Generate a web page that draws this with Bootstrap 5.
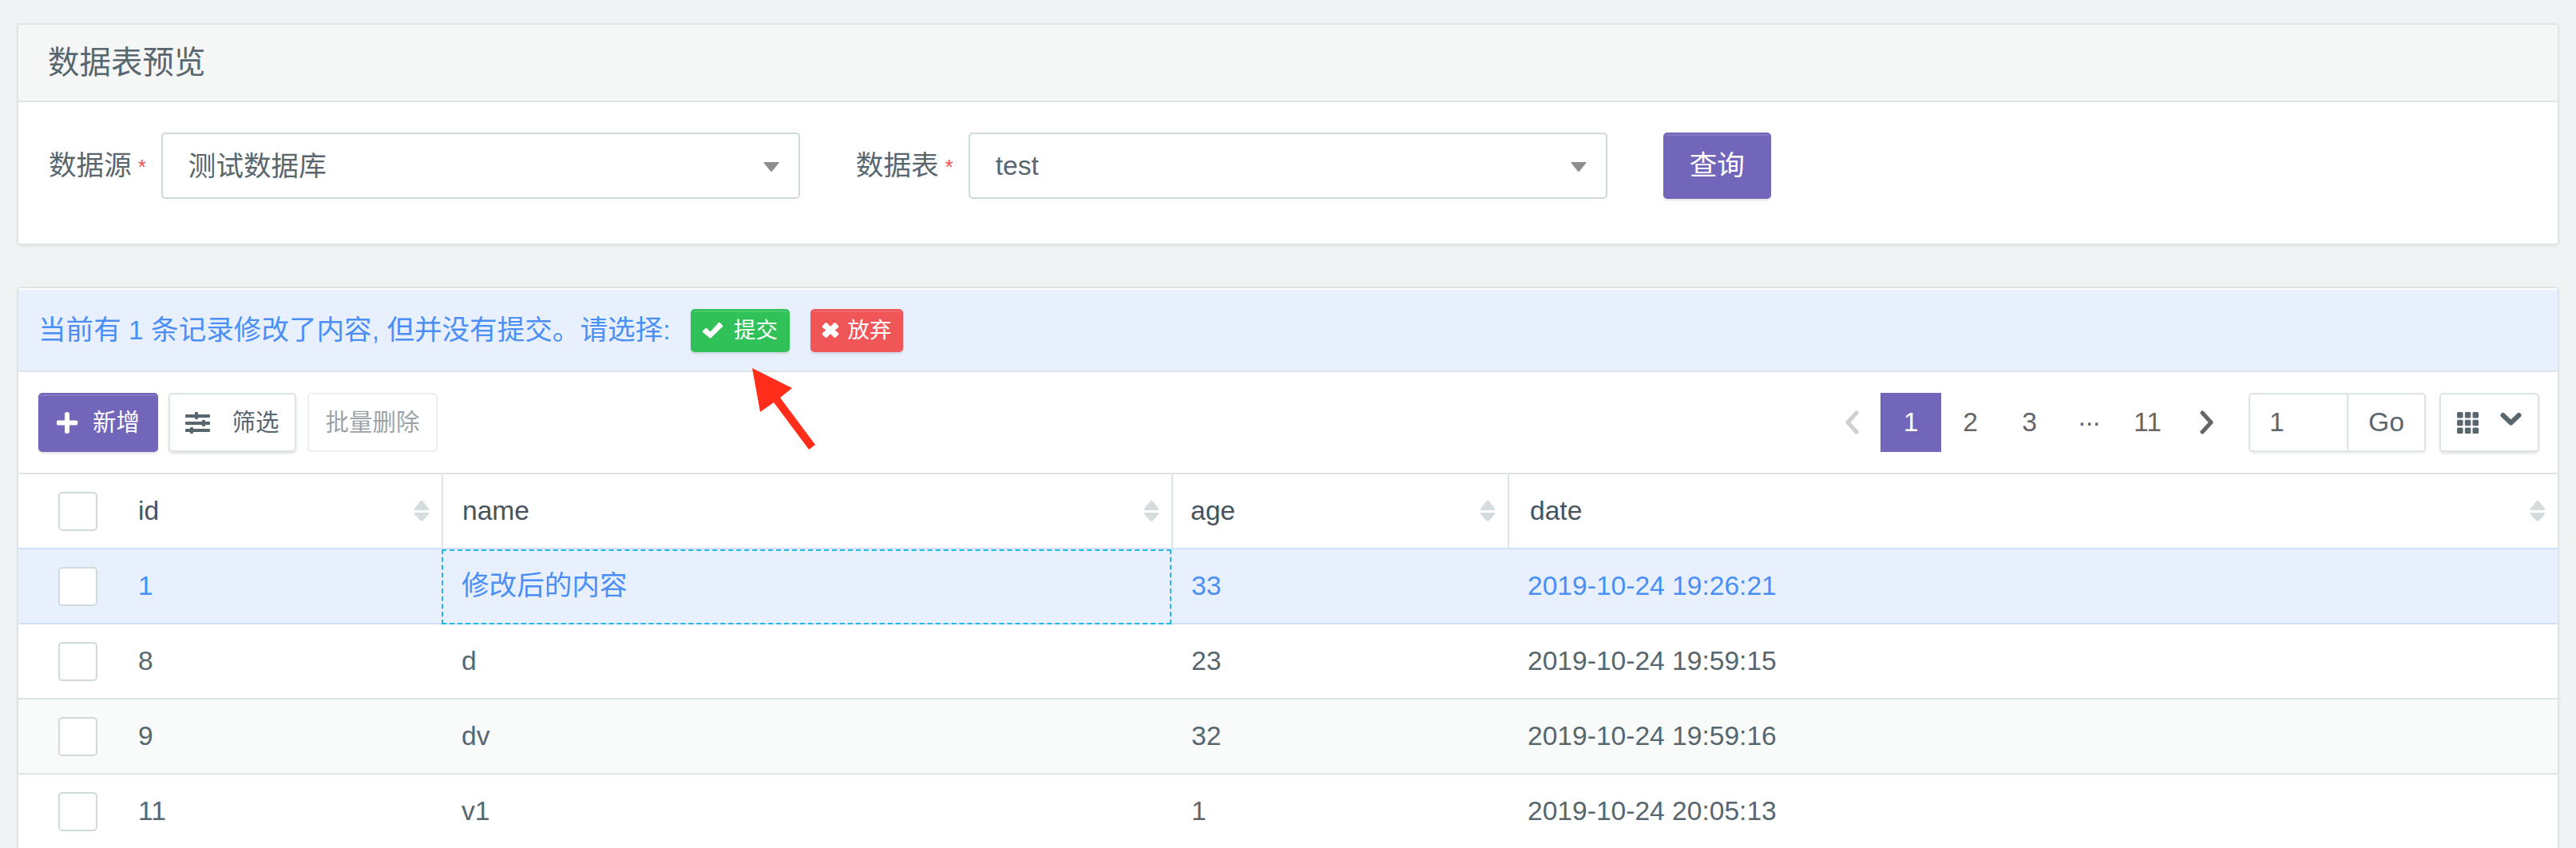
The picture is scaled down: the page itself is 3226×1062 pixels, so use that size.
<!DOCTYPE html>
<html lang="zh-CN">
<head>
<meta charset="utf-8">
<title>数据表预览</title>
<link rel="stylesheet" href="https://cdn.jsdelivr.net/npm/bootstrap@5.3.0/dist/css/bootstrap.min.css">
<style>
html,body{height:100%;overflow:hidden}
body{background:#eff3f4;color:#58666e;font-family:"Liberation Sans","Noto Sans CJK SC",sans-serif;font-size:33.6px;line-height:1.2;padding:29px 21px 0;position:relative}
.pv-zh{font-size:34.6px}
.pv-panel{border:2px solid #dee5e7;border-radius:5px;box-shadow:0 2px 3px rgba(0,0,0,.06);background:#fff;--bs-card-bg:#fff}
.pv-panel-head{background:#f5f7f7;border-bottom:2px solid #dee5e7;height:97px;padding:0 37px;font-size:39.5px;display:flex;align-items:center;border-radius:3px 3px 0 0}
.pv-form{height:177px;padding:38px 38px 0;gap:0}
.pv-field{height:83px}
.pv-label{white-space:nowrap;margin-right:19px}
.pv-star{color:#f05050;font-size:26px;margin-left:8px;vertical-align:1px}
.pv-select{width:800px;height:83px;border:2px solid #cfdadd;border-radius:5px;padding:2px 24px 0 32px;background:#fff;margin-right:70px}
.pv-caret{width:20px;height:12px;fill:#8e8e8e}
.pv-query{width:135px;height:83px}
.btn.pv-btn{font-size:29.5px;line-height:1;border-width:2px;border-radius:5px;display:inline-flex;align-items:center;justify-content:center;padding:0;box-shadow:inset 0 2px 0 rgba(255,255,255,.12),0 2px 3px rgba(0,0,0,.12)}
.btn.pv-primary{background:#7266ba;border-color:#7266ba;color:#fff;font-size:34.6px}
.pv-notice{background:#e8f0fd;color:#4b8ff5;height:103px;margin-top:2px;border-bottom:2px solid #dee5e7;padding:0 25px}
.pv-notice-text{margin-right:25px;white-space:nowrap}
.btn.pv-ok{background:#30c258;border-color:#30c258;color:#fff;width:124px;height:54px;font-size:27.500px;gap:13px}
.btn.pv-drop{background:#f05558;border-color:#f05558;color:#fff;width:116px;height:54px;font-size:27.500px;gap:11px;margin-left:26px}
.pv-bar{height:128px;padding:0 23px 0 25px;border-bottom:2px solid #dee5e7}
.btn.pv-add{background:#7266ba;border-color:#7266ba;color:#fff;width:150px;height:74px;gap:18px}
.btn.pv-filter{background:#fff;border-color:#dee5e7;color:#58666e;width:160px;height:74px;gap:27px;margin-left:13px}
.btn.pv-batch{background:#fff;border-color:#ebeff0;color:#9aa3a8;width:163px;height:74px;margin-left:14px;box-shadow:none;opacity:1}
.pv-pages{gap:0;margin:0;--bs-pagination-border-width:0}
.pv-pages .page-link{width:75px;height:74px;padding:0;border:0;background:transparent;color:#666;font-size:33.6px;display:flex;align-items:center;justify-content:center;border-radius:0!important}
.pv-pages .active .page-link{background:#7266ba;color:#fff;width:76px}
.pv-pages .pv-dots{letter-spacing:-2px}
.pv-jump{width:222px;height:74px;margin-left:15px;border:2px solid #dee5e7;border-radius:5px;box-shadow:0 2px 3px rgba(0,0,0,.08);flex-wrap:nowrap}
.pv-jump-value{width:123px;padding-left:24px;color:#58666e;display:flex;align-items:center;border-right:2px solid #dee5e7}
.pv-jump-go{flex:1;display:flex;align-items:center;justify-content:center}
.btn.pv-cols{background:#fff;border-color:#dee5e7;width:125px;height:74px;margin-left:17px;gap:27px}
.pv-chev{margin-bottom:10px}
.pv-table{margin:0;table-layout:fixed;width:3180px;border-collapse:separate;border-spacing:0;--bs-table-bg:transparent;--bs-table-color:#58666e;color:#58666e}
.pv-table th,.pv-table td{height:94px;padding:0 15px 0 25px;border-bottom:2px solid #dee5e7;vertical-align:middle;font-weight:400;font-size:33.6px;box-shadow:none}
.pv-table th{color:#46555d;border-left:2px solid #dee5e7;border-bottom-color:#cfe0fb;padding-left:24px}
.pv-table th:first-child,.pv-table th:nth-child(2){border-left:0}
.pv-table th:nth-child(2),.pv-table td:nth-child(2){padding-left:25px}
.pv-table th:nth-child(4){padding-left:22px}
.pv-table th:nth-child(5){padding-left:26px}
.pv-table .pv-c0{padding:0 0 0 50px}
.pv-w0{width:125px}.pv-w1{width:405px}.pv-w2{width:914px}.pv-w3{width:421px}.pv-w4{width:1315px}
.pv-check{width:49px;height:49px;border:2px solid #cfdadd;border-radius:5px;background:#fff;display:block}
.pv-sort{width:20px;height:26px;fill:#d5dcde;flex:none}
.pv-table tr.pv-changed td{background:#e8f0fd;color:#4b8ff5;border-bottom-color:#cfe0fb}
.pv-table tr.pv-stripe td{background:#f9fbfb}
.pv-table td.pv-edited{outline:2px dashed #23b7e5;outline-offset:-2px}
.pv-arrow{position:absolute;left:942px;top:461px;width:80px;height:103px;fill:#ff2d1a}
.pv-gap{margin-top:52px}
</style>
</head>
<body>
<div class="card pv-panel">
  <div class="pv-panel-head">数据表预览</div>
  <div class="d-flex align-items-start pv-form">
    <div class="d-flex align-items-center pv-field"><span class="pv-label"><span class="pv-zh">数据源</span><span class="pv-star">*</span></span></div>
    <div class="d-flex align-items-center justify-content-between pv-select"><span class="pv-zh">测试数据库</span><svg class="pv-caret" viewBox="0 0 20 12"><path d="M1 0h18q1 0 .5 1L11 11.500q-1 .8-2 0L.500 1Q0 0 1 0z"/></svg></div>
    <div class="d-flex align-items-center pv-field"><span class="pv-label"><span class="pv-zh">数据表</span><span class="pv-star">*</span></span></div>
    <div class="d-flex align-items-center justify-content-between pv-select"><span>test</span><svg class="pv-caret" viewBox="0 0 20 12"><path d="M1 0h18q1 0 .5 1L11 11.500q-1 .8-2 0L.500 1Q0 0 1 0z"/></svg></div>
    <button type="button" class="btn pv-btn pv-primary pv-query">查询</button>
  </div>
</div>

<div class="card pv-panel pv-gap">
  <div class="d-flex align-items-center pv-notice">
    <span class="pv-notice-text"><span class="pv-zh">当前有</span> 1 <span class="pv-zh">条记录修改了内容</span>, <span class="pv-zh">但并没有提交。请选择</span>:</span>
    <button type="button" class="btn pv-btn pv-ok"><svg width="27" height="21" viewBox="0 0 27 21" fill="#fff"><path d="M1 11.500l3.500-3.500q.8-.7 1.600 0L10.500 12.500 20.900 1q.8-.7 1.600 0L26 4.500q.7.8 0 1.600L11.300 20.300q-.8.7-1.600 0L1 13.100q-.7-.8 0-1.600z"/></svg><span>提交</span></button>
    <button type="button" class="btn pv-btn pv-drop"><svg width="22" height="21" viewBox="0 0 20 19" fill="#fff"><path d="M1 4.500L4 1.300q1-.9 2 0L10 5.300 14 1.300q1-.9 2 0l3 3.200q.9 1 0 2L15 9.500l4 3.200q.9 1 0 2l-3 3q-1 .9-2 0l-4-4-4 4q-1 .9-2 0l-3-3q-.9-1 0-2l4-3.200-4-3q-.9-1 0-2z"/></svg><span>放弃</span></button>
  </div>
  <div class="d-flex align-items-center pv-bar">
    <button type="button" class="btn pv-btn pv-add"><svg width="27" height="27" viewBox="0 0 27 27" fill="#fff"><path d="M10.500 2.500q0-2.500 3-2.500t3 2.500v8h8q2.500 0 2.500 3t-2.500 3h-8v8q0 2.500-3 2.500t-3-2.500v-8h-8Q0 16.500 0 13.500t2.500-3h8z" transform="translate(-.5 0)"/></svg><span>新增</span></button>
    <button type="button" class="btn pv-btn pv-filter"><svg width="31" height="27" viewBox="0 0 31 27" fill="#58666e"><rect y="3" width="31" height="4" rx="1"/><rect x="12" y="0" width="4" height="9" rx="1"/><rect y="12" width="31" height="4" rx="1"/><rect x="21" y="10" width="4" height="8" rx="1"/><rect y="21" width="31" height="4" rx="1"/><rect x="6" y="19" width="4" height="8" rx="1"/></svg><span>筛选</span></button>
    <button type="button" class="btn pv-btn pv-batch">批量删除</button>
    <ul class="pagination pv-pages ms-auto">
      <li class="page-item"><span class="page-link"><svg width="18" height="30" viewBox="0 0 18 30" fill="none" stroke="#cfcfcf" stroke-width="5" stroke-linecap="round" stroke-linejoin="round"><path d="M15 3L4 15l11 12"/></svg></span></li>
      <li class="page-item active"><span class="page-link">1</span></li>
      <li class="page-item"><span class="page-link">2</span></li>
      <li class="page-item"><span class="page-link">3</span></li>
      <li class="page-item"><span class="page-link pv-dots">···</span></li>
      <li class="page-item"><span class="page-link">11</span></li>
      <li class="page-item"><span class="page-link"><svg width="18" height="30" viewBox="0 0 18 30" fill="none" stroke="#666" stroke-width="5" stroke-linecap="round" stroke-linejoin="round"><path d="M3 3l11 12L3 27"/></svg></span></li>
    </ul>
    <div class="d-flex pv-jump"><span class="pv-jump-value">1</span><span class="pv-jump-go">Go</span></div>
    <button type="button" class="btn pv-btn pv-cols"><svg width="27" height="27" viewBox="0 0 27 27" fill="#58666e"><rect width="7.500" height="7.500" rx="1.500"/><rect x="9.800" width="7.500" height="7.500" rx="1.500"/><rect x="19.500" width="7.500" height="7.500" rx="1.500"/><rect y="9.800" width="7.500" height="7.500" rx="1.500"/><rect x="9.800" y="9.800" width="7.500" height="7.500" rx="1.500"/><rect x="19.500" y="9.800" width="7.500" height="7.500" rx="1.500"/><rect y="19.500" width="7.500" height="7.500" rx="1.500"/><rect x="9.800" y="19.500" width="7.500" height="7.500" rx="1.500"/><rect x="19.500" y="19.500" width="7.500" height="7.500" rx="1.500"/></svg><svg class="pv-chev" width="27" height="17" viewBox="0 0 27 17" fill="none" stroke="#58666e" stroke-width="6" stroke-linecap="round" stroke-linejoin="round"><path d="M3.500 4l10 9.500 10-9.500"/></svg></button>
  </div>
  <table class="table pv-table">
    <colgroup><col class="pv-w0"><col class="pv-w1"><col class="pv-w2"><col class="pv-w3"><col class="pv-w4"></colgroup>
    <thead><tr>
      <th class="pv-c0"><span class="pv-check"></span></th>
      <th><div class="d-flex justify-content-between align-items-center"><span>id</span><svg class="pv-sort" viewBox="0 0 20 26"><path d="M10 0q1 0 2 1l7 9q1 2-1 2H2Q0 12 1 10l7-9q1-1 2-1zM2 15h16q2 0 1 2l-7 8q-2 1-4 0l-7-8q-1-2 1-2z"/></svg></div></th>
      <th><div class="d-flex justify-content-between align-items-center"><span>name</span><svg class="pv-sort" viewBox="0 0 20 26"><path d="M10 0q1 0 2 1l7 9q1 2-1 2H2Q0 12 1 10l7-9q1-1 2-1zM2 15h16q2 0 1 2l-7 8q-2 1-4 0l-7-8q-1-2 1-2z"/></svg></div></th>
      <th><div class="d-flex justify-content-between align-items-center"><span>age</span><svg class="pv-sort" viewBox="0 0 20 26"><path d="M10 0q1 0 2 1l7 9q1 2-1 2H2Q0 12 1 10l7-9q1-1 2-1zM2 15h16q2 0 1 2l-7 8q-2 1-4 0l-7-8q-1-2 1-2z"/></svg></div></th>
      <th><div class="d-flex justify-content-between align-items-center"><span>date</span><svg class="pv-sort" viewBox="0 0 20 26"><path d="M10 0q1 0 2 1l7 9q1 2-1 2H2Q0 12 1 10l7-9q1-1 2-1zM2 15h16q2 0 1 2l-7 8q-2 1-4 0l-7-8q-1-2 1-2z"/></svg></div></th>
    </tr></thead>
    <tbody>
      <tr class="pv-changed"><td class="pv-c0"><span class="pv-check"></span></td><td>1</td><td class="pv-edited"><span class="pv-zh">修改后的内容</span></td><td>33</td><td>2019-10-24 19:26:21</td></tr>
      <tr><td class="pv-c0"><span class="pv-check"></span></td><td>8</td><td>d</td><td>23</td><td>2019-10-24 19:59:15</td></tr>
      <tr class="pv-stripe"><td class="pv-c0"><span class="pv-check"></span></td><td>9</td><td>dv</td><td>32</td><td>2019-10-24 19:59:16</td></tr>
      <tr><td class="pv-c0"><span class="pv-check"></span></td><td>11</td><td>v1</td><td>1</td><td>2019-10-24 20:05:13</td></tr>
    </tbody>
  </table>
</div>
<svg class="pv-arrow" viewBox="0 0 80 103"><path d="M0 0L50 25 35 37 79 96 71 102 27 43 10 55z"/></svg>
<script src="https://cdn.jsdelivr.net/npm/bootstrap@5.3.0/dist/js/bootstrap.bundle.min.js"></script>
</body>
</html>
